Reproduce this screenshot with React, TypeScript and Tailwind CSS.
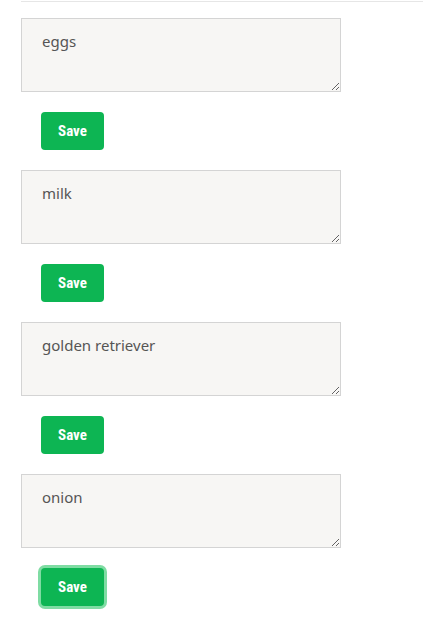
import React from "react";

const items = ["eggs", "milk", "golden retriever", "onion"];

export default function App() {
  return (
    <div className="min-h-[621px] bg-white pl-[21px] pt-px">
      <div className="h-px bg-[#e6e6e6]" />
      <div className="flex flex-col pt-4">
        {items.map((t, i) => (
          <div key={t} className="flex flex-col">
            <textarea
              defaultValue={t}
              className="box-border h-[74px] w-[320px] border border-[#d4d4d4] bg-[#f7f6f4] px-5 pt-[11px] text-[15px] leading-[22px] text-[#555] outline-none"
              style={{ fontFamily: '"Segoe UI", "Noto Sans", sans-serif' }}
            />
            <div className="pb-5 pl-5 pt-5">
              <button
                className={
                  "h-[38px] w-[63px] rounded-[4px] bg-[#0db553] text-[15px] font-bold text-white " +
                  (i === 3 ? "ring-[3px] ring-[#7fdca3]" : "")
                }
                style={{ fontFamily: '"Liberation Sans Narrow", "Roboto Condensed", "Liberation Sans", sans-serif' }}
              >
                Save
              </button>
            </div>
          </div>
        ))}
      </div>
    </div>
  );
}
